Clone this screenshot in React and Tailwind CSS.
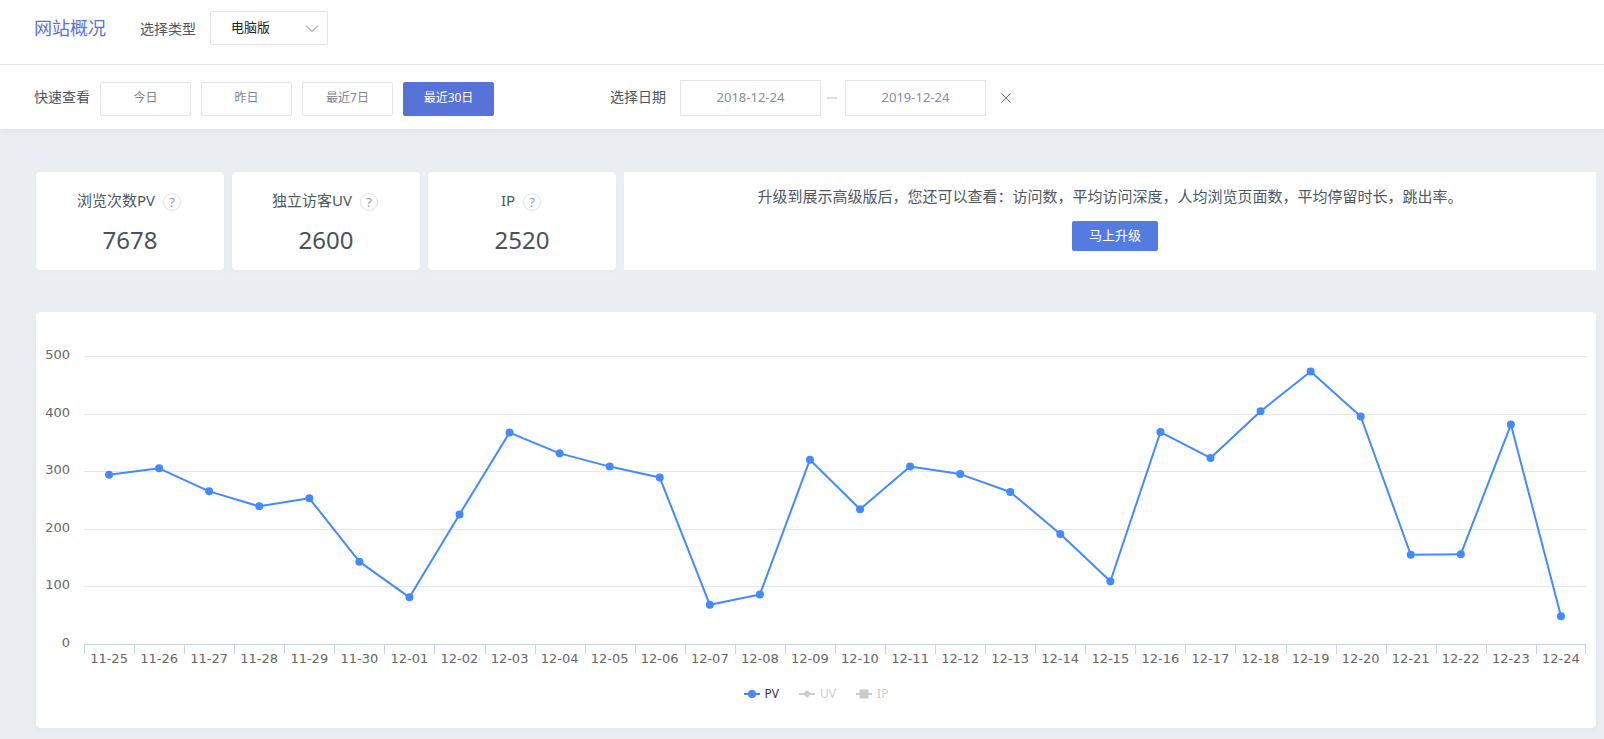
import { useId, useState } from "react";

const TYPES = ["电脑版", "手机版"];
const RANGES = ["今日", "昨日", "最近7日", "最近30日"];

const STATS = [
  { label: "浏览次数PV", value: 7678 },
  { label: "独立访客UV", value: 2600 },
  { label: "IP", value: 2520 },
];

const PV_DATA = [
  ["11-25", 294], ["11-26", 305], ["11-27", 265], ["11-28", 239], ["11-29", 253],
  ["11-30", 143], ["12-01", 81], ["12-02", 225], ["12-03", 367], ["12-04", 331],
  ["12-05", 308], ["12-06", 289], ["12-07", 68], ["12-08", 86], ["12-09", 320],
  ["12-10", 234], ["12-11", 308], ["12-12", 295], ["12-13", 264], ["12-14", 191],
  ["12-15", 109], ["12-16", 368], ["12-17", 323], ["12-18", 404], ["12-19", 473],
  ["12-20", 395], ["12-21", 155], ["12-22", 156], ["12-23", 381], ["12-24", 48],
];

const Y_TICKS = [500, 400, 300, 200, 100, 0];
const Y_MAX = 500;
const PLOT_HEIGHT = 288;

const yOf = (value) => PLOT_HEIGHT - (value / Y_MAX) * PLOT_HEIGHT;
const xOf = (index) => `${((index + 0.5) / PV_DATA.length) * 100}%`;

function TypeSelect() {
  const id = useId();
  return (
    <div className="flex items-center gap-3.5">
      <label htmlFor={id} className="pt-0.5 text-sm text-[#4c5761]">选择类型</label>
      <div className="relative">
        <select
          id={id}
          className="block h-[34px] w-[118px] appearance-none rounded-xs border border-[#e4e5e8] bg-white pl-5 pr-8 text-[13px] text-[#222]"
        >
          {TYPES.map((type) => (
            <option key={type}>{type}</option>
          ))}
        </select>
        <svg className="pointer-events-none absolute right-2.5 top-3.5 h-2 w-3" viewBox="0 0 12 8" fill="none" stroke="#777" strokeWidth="1">
          <path d="M0.5 1 L6 6.5 L11.5 1" />
        </svg>
      </div>
    </div>
  );
}

function QuickRange() {
  const [active, setActive] = useState("最近30日");
  return (
    <div className="flex items-center gap-2.5">
      <span className="pb-1 text-sm text-[#4c5761]">快速查看</span>
      {RANGES.map((range) => (
        <button
          key={range}
          type="button"
          onClick={() => setActive(range)}
          className={`h-[34px] w-[91px] rounded-xs border pb-0.5 text-xs ${
            active === range ? "border-[#5873d8] bg-[#5873d8] text-white" : "border-[#e4e5e8] bg-white text-[#7c8493]"
          }`}
        >
          {range}
        </button>
      ))}
    </div>
  );
}

function DateRange() {
  const id = useId();
  const inputClass = "h-9 w-[141px] border border-[#e4e5e8] bg-white pb-0.5 text-center text-[13px] text-[#868d98]";
  return (
    <div className="flex items-center">
      <label htmlFor={id} className="mr-3.5 pb-0.5 text-sm text-[#4c5761]">选择日期</label>
      <input id={id} type="text" defaultValue="2018-12-24" className={inputClass} />
      <span className="ml-1.5 mr-2 h-0.5 w-2.5 bg-[#dedede]" />
      <input type="text" aria-label="结束日期" defaultValue="2019-12-24" className={inputClass} />
      <button type="button" aria-label="清除日期" className="ml-3.5">
        <svg className="h-3 w-3" viewBox="0 0 12 12" stroke="#777" strokeWidth="1">
          <path d="M1.5 1.5 L10.5 10.5 M10.5 1.5 L1.5 10.5" />
        </svg>
      </button>
    </div>
  );
}

function StatCard({ label, value }) {
  return (
    <div className="flex h-[98px] w-[188px] shrink-0 flex-col items-center rounded bg-white pt-4 shadow-[0_2px_6px_rgba(0,0,0,0.02)]">
      <div className="flex items-center gap-2 pr-0.5">
        <span className="text-[15px] leading-6 text-[#4c5761]">{label}</span>
        <span className="mt-1 flex h-[18px] w-[18px] items-center justify-center rounded-full border border-[#dfe1e6] text-[13px] leading-none text-[#9a9a9a]">
          ?
        </span>
      </div>
      <p className="mt-3 text-2xl leading-8 text-[#48525c]">{value}</p>
    </div>
  );
}

function LegendItem({ label, shape, active }) {
  const color = active ? "#448aff" : "#cccccc";
  return (
    <button type="button" className={`flex items-center gap-[5px] text-xs leading-5 ${active ? "text-[#333]" : "text-[#ccc]"}`}>
      <svg className="h-4 w-4" viewBox="0 0 16 16" fill={color}>
        <path d="M0 8 H16" stroke={color} strokeWidth="2" />
        {shape === "circle" && <circle cx="8" cy="8" r="4" />}
        {shape === "diamond" && <path d="M8 4 L12 8 L8 12 L4 8 Z" />}
        {shape === "square" && <rect x="4" y="4" width="8" height="8" stroke={color} />}
      </svg>
      {label}
    </button>
  );
}

function YAxisLabels() {
  return (
    <div className="flex h-[304px] w-[42px] shrink-0 flex-col justify-between pr-3.5 text-right font-['DejaVu_Sans',sans-serif] text-[13px] leading-4 text-[#666]">
      {Y_TICKS.map((tick) => (
        <span key={tick}>{tick}</span>
      ))}
    </div>
  );
}

function VisitChart() {
  return (
    <section className="rounded bg-white pb-6 pl-1.5 pr-2.5 pt-[35px] shadow-[0_2px_6px_rgba(0,0,0,0.03)]">
      <div className="flex">
        <YAxisLabels />
        <div className="min-w-0 flex-1 pt-[9px]">
          <svg className="block h-[289px] w-full overflow-visible">
            {Y_TICKS.map((tick) => (
              <line
                key={tick}
                x1="0"
                x2="100%"
                y1={Math.round(yOf(tick)) + 0.5}
                y2={Math.round(yOf(tick)) + 0.5}
                stroke={tick === 0 ? "#c6d3e8" : "#e6e6e6"}
              />
            ))}
            <g stroke="#448aff" strokeWidth="2" strokeLinecap="round">
              {PV_DATA.slice(1).map(([day, value], i) => (
                <line key={day} x1={xOf(i)} y1={yOf(PV_DATA[i][1])} x2={xOf(i + 1)} y2={yOf(value)} />
              ))}
            </g>
            {PV_DATA.map(([day, value], i) => (
              <circle key={day} cx={xOf(i)} cy={yOf(value)} r="4" fill="#448aff" />
            ))}
          </svg>
          <ol className="flex">
            {PV_DATA.map(([day]) => (
              <li
                key={day}
                className="group min-w-0 flex-1 text-center font-['DejaVu_Sans',sans-serif] text-[13px] leading-5 text-[#666]"
              >
                <span className="block h-[9px] border-l border-[#c6d3e8] group-last:border-r" />
                <span className="-mt-[5px] block whitespace-nowrap">{day}</span>
              </li>
            ))}
          </ol>
        </div>
      </div>
      <div className="mt-[15px] flex justify-center gap-5 pl-1">
        <LegendItem label="PV" shape="circle" active />
        <LegendItem label="UV" shape="diamond" />
        <LegendItem label="IP" shape="square" />
      </div>
    </section>
  );
}

export default function App() {
  return (
    <div className="min-h-screen bg-[#eaedf2] font-['Noto_Sans','Noto_Sans_CJK_SC',sans-serif]">
      <header className="bg-white shadow-[0_2px_8px_rgba(0,0,0,0.06)]">
        <div className="flex h-[65px] items-center gap-[34px] border-b border-[#e7e8ee] px-[34px] pb-2">
          <h1 className="text-lg text-[#5873d8]">网站概况</h1>
          <TypeSelect />
        </div>
        <div className="flex h-16 items-end gap-[116px] px-[34px] pb-[13px]">
          <QuickRange />
          <DateRange />
        </div>
      </header>

      <main className="pb-[11px] pl-9 pr-2 pt-[43px]">
        <div className="flex gap-2">
          {STATS.map((stat) => (
            <StatCard key={stat.label} {...stat} />
          ))}
          <div className="flex min-w-0 flex-1 flex-col items-center bg-white pt-3">
            <p className="text-[15px] leading-6 text-[#4c5761]">
              升级到展示高级版后，您还可以查看：访问数，平均访问深度，人均浏览页面数，平均停留时长，跳出率。
            </p>
            <button type="button" className="ml-2.5 mt-[13px] h-[30px] w-[86px] rounded-xs bg-[#537be0] text-[13px] text-white">
              马上升级
            </button>
          </div>
        </div>

        <div className="mt-[42px]">
          <VisitChart />
        </div>
      </main>
    </div>
  );
}
